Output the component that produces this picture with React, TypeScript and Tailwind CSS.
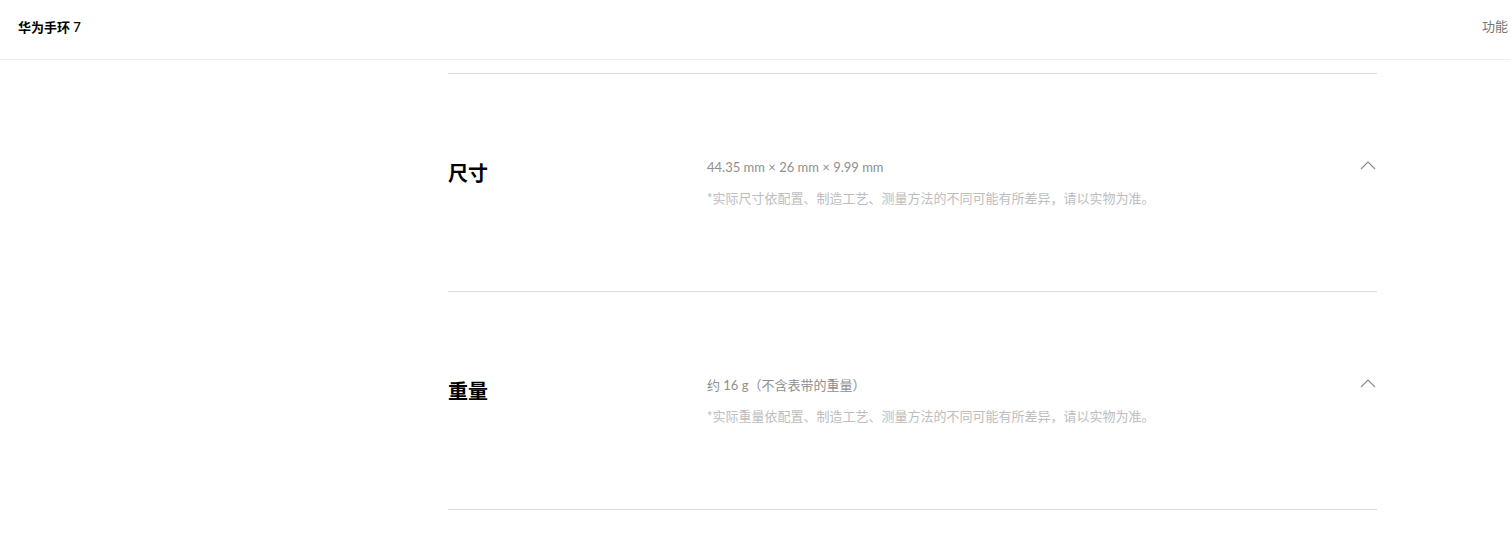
const FONT = "font-['Lato','Noto_Sans_CJK_SC',sans-serif]";

interface SpecRow {
  title: string;
  value: string;
  note: string;
}

const SPECS: SpecRow[] = [
  {
    title: "尺寸",
    value: "44.35 mm × 26 mm × 9.99 mm",
    note: "*实际尺寸依配置、制造工艺、测量方法的不同可能有所差异，请以实物为准。",
  },
  {
    title: "重量",
    value: "约 16 g（不含表带的重量）",
    note: "*实际重量依配置、制造工艺、测量方法的不同可能有所差异，请以实物为准。",
  },
];

function Chevron() {
  return (
    <svg width="16" height="9" viewBox="0 0 16 9" fill="none">
      <path d="M1 8 L8 1 L15 8" stroke="#8a8a8a" strokeWidth="1.1" />
    </svg>
  );
}

export default function App() {
  return (
    <div className={`${FONT} w-[1510px] h-[539px] overflow-hidden bg-white`}>
      {/* Header */}
      <div className="flex h-[60px] items-start overflow-hidden border-b border-[#ececec] pl-[18px]">
        <div className="pt-[17px] text-[13px] leading-[20px] font-semibold text-black">华为手环 7</div>
        <div className="ml-auto w-[28px] shrink-0 whitespace-nowrap pt-[16px] text-[13px] leading-[20px] text-[#777]">
          功能
        </div>
      </div>

      {/* Specs */}
      <div className="pl-[448px] pt-[13px]">
        <div className="w-[929px]">
          {SPECS.map((s) => (
            <div key={s.title} className="flex h-[218px] border-t border-[#dcdcdc] pt-[83px]">
              <div className="w-[259px] shrink-0 pt-[2px] text-[20px] leading-[28px] font-bold text-black">
                {s.title}
              </div>
              <div className="flex-1">
                <div className="text-[13px] leading-[20px] text-[#8f8f8f]">{s.value}</div>
                <div className="mt-[11px] text-[13px] leading-[20px] text-[#bdbdbd]">{s.note}</div>
              </div>
              <div className="pr-[1px] pt-[4px]">
                <Chevron />
              </div>
            </div>
          ))}
          <div className="border-t border-[#dcdcdc]" />
        </div>
      </div>
    </div>
  );
}
